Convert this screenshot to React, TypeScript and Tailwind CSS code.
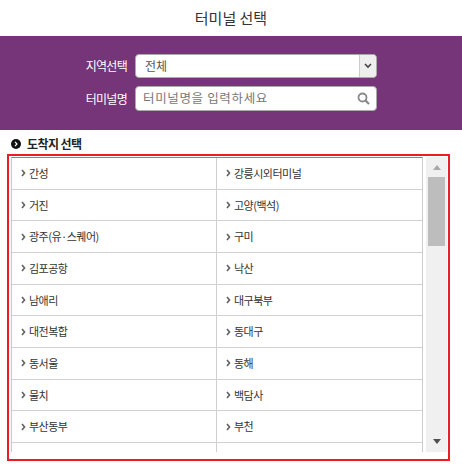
import React from "react";

const TERMINALS = [
  ["간성", "강릉시외터미널"],
  ["거진", "고양(백석)"],
  ["광주(유·스퀘어)", "구미"],
  ["김포공항", "낙산"],
  ["남애리", "대구북부"],
  ["대전복합", "동대구"],
  ["동서울", "동해"],
  ["물치", "백담사"],
  ["부산동부", "부천"],
  ["", ""],
];

function Chevron() {
  return (
    <svg width="5" height="8" viewBox="0 0 5 8" className="shrink-0">
      <path d="M1 1l2.500 3L1 7" fill="none" stroke="#666" strokeWidth="1.700" />
    </svg>
  );
}

export default function App() {
  return (
    <div className="w-[462px] h-[468px] bg-white overflow-hidden font-['Noto_Sans_CJK_KR',sans-serif] text-[#333]">
      {/* Title */}
      <div className="h-9 flex items-center justify-center text-[15px] text-[#333]">터미널 선택</div>

      {/* Search panel */}
      <div className="h-[94px] bg-[#753578] pt-[18px] flex flex-col gap-2 items-end pr-[85px]">
        <div className="flex items-center gap-2">
          <label className="text-xs tracking-[-0.7px] text-white">지역선택</label>
          <div className="w-[242px] h-6 bg-white rounded border border-[#aaa] flex items-center">
            <span className="flex-1 pl-[9px] text-xs text-[#555]">전체</span>
            <span className="w-[17px] h-full bg-[#eee] border-l border-[#ccc] rounded-r flex items-center justify-center">
              <svg width="8" height="6" viewBox="0 0 8 6">
                <path d="M1 1l3 3 3-3" fill="none" stroke="#444" strokeWidth="1.600" />
              </svg>
            </span>
          </div>
        </div>
        <div className="flex items-center gap-2">
          <label className="text-xs tracking-[-0.7px] text-white">터미널명</label>
          <div className="w-[242px] h-[25px] bg-white rounded border border-[#aaa] flex items-center pl-[7px] pr-[6px]">
            <span className="flex-1 text-[12.5px] tracking-[0.65px] text-[#777]">터미널명을 입력하세요</span>
            <svg width="13" height="13" viewBox="0 0 13 13">
              <circle cx="5.500" cy="5.500" r="4" fill="none" stroke="#888" strokeWidth="1.800" />
              <path d="M8.500 8.500l3.500 3.500" stroke="#888" strokeWidth="2.200" />
            </svg>
          </div>
        </div>
      </div>

      {/* Destination heading */}
      <div className="h-[22px] mt-[2px] pt-[2px] pl-[11px] flex items-center gap-[6px] text-xs tracking-[-0.6px] font-bold text-[#222]">
        <span className="w-[10px] h-[10px] rounded-full bg-[#111] flex items-center justify-center">
          <svg width="4" height="6" viewBox="0 0 4 6">
            <path d="M1 .8L3 3 1 5.200" fill="none" stroke="#fff" strokeWidth="1.200" />
          </svg>
        </span>
        도착지 선택
      </div>

      {/* Destination list */}
      <div className="ml-[7px] w-[443px] h-[307px] border-2 border-[#ed1c24] pl-[2px] pt-[1px] flex items-start">
        <div className="w-[412px] h-[295px] overflow-hidden border-x border-[#ccc] border-t border-t-[#888]">
          <div className="grid grid-cols-[205px_1fr] auto-rows-[31.67px]">
            {TERMINALS.flat().map((name, idx) => (
              <div
                key={`terminal-${idx}`}
                className="flex items-center gap-[3px] pl-[9px] border-b border-[#d0d0d0] odd:border-r text-[11px] tracking-[-0.5px] text-[#333]"
              >
                {name && <Chevron />}
                {name}
              </div>
            ))}
          </div>
        </div>

        {/* Scrollbar */}
        <div className="ml-[3px] w-[21px] h-[295px] bg-[#f0f0f0] flex flex-col items-center pt-[8px] pb-[8px]">
          <span className="w-0 h-0 border-x-[4.5px] border-x-transparent border-b-[5px] border-b-[#a8a8a8]" />
          <span className="mt-[7px] w-[17px] h-[69px] bg-[#bdbdbd]" />
          <span className="mt-auto w-0 h-0 border-x-[4.5px] border-x-transparent border-t-[5px] border-t-[#505050]" />
        </div>
      </div>
    </div>
  );
}
